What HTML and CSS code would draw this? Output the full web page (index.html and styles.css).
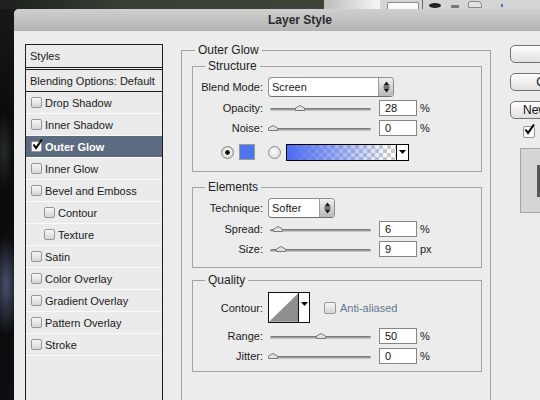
FILE: index.html
```html
<!DOCTYPE html>
<html lang="en">
<head>
<meta charset="UTF-8">
<meta name="viewport" content="width=device-width, initial-scale=1.0">
<title>Layer Style</title>
<link rel="stylesheet" href="styles.css">
</head>
<body>

<div class="desktop">
    <div class="topstrip">
        <div class="strip-photo"></div>
        <div class="strip-fade"></div>
        <div class="strip-tools">
            <span class="tool-box"></span>
            <span class="tool-sep"></span>
            <span class="tool-eye"></span>
            <span class="tool-chip"></span>
            <span class="tool-folder"></span>
            <span class="tool-dot"></span>
        </div>
    </div>

    <div class="dialog">
        <div class="titlebar">Layer Style</div>
        <div class="dialog-body">

            <ul class="styles-list">
                <li class="list-head">Styles</li>
                <li class="list-blend">Blending Options: Default</li>
                <li><span class="check"></span>Drop Shadow</li>
                <li><span class="check"></span>Inner Shadow</li>
                <li class="selected"><span class="check on"><svg width="13" height="12" viewBox="0 0 13 12"><path d="M2.5 5.5 L5 9 L11 0.5" stroke="#000" stroke-width="2" fill="none"/></svg></span>Outer Glow</li>
                <li><span class="check"></span>Inner Glow</li>
                <li><span class="check"></span>Bevel and Emboss</li>
                <li class="sub"><span class="check"></span>Contour</li>
                <li class="sub"><span class="check"></span>Texture</li>
                <li><span class="check"></span>Satin</li>
                <li><span class="check"></span>Color Overlay</li>
                <li><span class="check"></span>Gradient Overlay</li>
                <li><span class="check"></span>Pattern Overlay</li>
                <li><span class="check"></span>Stroke</li>
            </ul>

            <fieldset class="group outer">
                <legend>Outer Glow</legend>

                <fieldset class="group structure">
                    <legend>Structure</legend>
                    <div class="row">
                        <span class="label">Blend Mode:</span>
                        <div class="select blend-select">
                            <span class="select-text">Screen</span>
                            <span class="stepper"><svg width="7" height="12" viewBox="0 0 7 12"><path d="M3.5 0.5 L6.5 4.5 H0.5Z M3.5 11.5 L6.5 7.5 H0.5Z" fill="#111"/><path d="M0.5 6 H6.5" stroke="#111" stroke-width="1"/></svg></span>
                        </div>
                    </div>
                    <div class="row slider-row">
                        <span class="label">Opacity:</span>
                        <div class="slider"><div class="track"></div><svg class="thumb" style="left: 27px" width="10" height="6" viewBox="0 0 10 6"><path d="M0.5 5.5 V3 L5 0.5 L9.5 3 V5.5Z" fill="#e2e2e2" stroke="#7a7a7a"/></svg></div>
                        <input class="num" type="text" value="28">
                        <span class="unit">%</span>
                    </div>
                    <div class="row">
                        <span class="label">Noise:</span>
                        <div class="slider"><div class="track"></div><svg class="thumb" style="left: 0px" width="10" height="6" viewBox="0 0 10 6"><path d="M0.5 5.5 V3 L5 0.5 L9.5 3 V5.5Z" fill="#e2e2e2" stroke="#7a7a7a"/></svg></div>
                        <input class="num" type="text" value="0">
                        <span class="unit">%</span>
                    </div>
                    <div class="row color-row">
                        <span class="radio on"></span>
                        <span class="swatch"></span>
                        <span class="radio second"></span>
                        <div class="gradient">
                            <span class="gradient-fill"></span>
                            <span class="gradient-arrow"><svg width="7" height="4" viewBox="0 0 7 4"><path d="M0 0 H7 L3.5 4Z" fill="#000"/></svg></span>
                        </div>
                    </div>
                </fieldset>

                <fieldset class="group elements">
                    <legend>Elements</legend>
                    <div class="row">
                        <span class="label">Technique:</span>
                        <div class="select tech-select">
                            <span class="select-text">Softer</span>
                            <span class="stepper"><svg width="7" height="12" viewBox="0 0 7 12"><path d="M3.5 0.5 L6.5 4.5 H0.5Z M3.5 11.5 L6.5 7.5 H0.5Z" fill="#111"/><path d="M0.5 6 H6.5" stroke="#111" stroke-width="1"/></svg></span>
                        </div>
                    </div>
                    <div class="row slider-row">
                        <span class="label">Spread:</span>
                        <div class="slider"><div class="track"></div><svg class="thumb" style="left: 5px" width="10" height="6" viewBox="0 0 10 6"><path d="M0.5 5.5 V3 L5 0.5 L9.5 3 V5.5Z" fill="#e2e2e2" stroke="#7a7a7a"/></svg></div>
                        <input class="num" type="text" value="6">
                        <span class="unit">%</span>
                    </div>
                    <div class="row">
                        <span class="label">Size:</span>
                        <div class="slider"><div class="track"></div><svg class="thumb" style="left: 8px" width="10" height="6" viewBox="0 0 10 6"><path d="M0.5 5.5 V3 L5 0.5 L9.5 3 V5.5Z" fill="#e2e2e2" stroke="#7a7a7a"/></svg></div>
                        <input class="num" type="text" value="9">
                        <span class="unit">px</span>
                    </div>
                </fieldset>

                <fieldset class="group quality">
                    <legend>Quality</legend>
                    <div class="row contour-row">
                        <span class="label">Contour:</span>
                        <div class="contour">
                            <svg class="contour-curve" width="30" height="29" viewBox="0 0 30 29"><path d="M0 29 L30 0 V29Z" fill="#8f8f8f"/></svg>
                            <span class="contour-arrow"><svg width="7" height="4" viewBox="0 0 7 4"><path d="M0 0 H7 L3.5 4Z" fill="#000"/></svg></span>
                        </div>
                        <span class="check small"></span>
                        <span class="disabled">Anti-aliased</span>
                    </div>
                    <div class="row slider-row range-row">
                        <span class="label">Range:</span>
                        <div class="slider"><div class="track"></div><svg class="thumb" style="left: 48px" width="10" height="6" viewBox="0 0 10 6"><path d="M0.5 5.5 V3 L5 0.5 L9.5 3 V5.5Z" fill="#e2e2e2" stroke="#7a7a7a"/></svg></div>
                        <input class="num" type="text" value="50">
                        <span class="unit">%</span>
                    </div>
                    <div class="row">
                        <span class="label">Jitter:</span>
                        <div class="slider"><div class="track"></div><svg class="thumb" style="left: 0px" width="10" height="6" viewBox="0 0 10 6"><path d="M0.5 5.5 V3 L5 0.5 L9.5 3 V5.5Z" fill="#e2e2e2" stroke="#7a7a7a"/></svg></div>
                        <input class="num" type="text" value="0">
                        <span class="unit">%</span>
                    </div>
                </fieldset>
            </fieldset>

            <div class="side">
                <button class="side-button">OK</button>
                <button class="side-button">Cancel</button>
                <button class="side-button">New Style...</button>
                <div class="side-check">
                    <span class="check small on"><svg width="13" height="12" viewBox="0 0 13 12"><path d="M2.5 5.5 L5 9 L11 0.5" stroke="#000" stroke-width="2" fill="none"/></svg></span>
                    <span>Preview</span>
                </div>
                <div class="preview"><div class="preview-inner"></div></div>
            </div>

        </div>
    </div>
</div>

</body>
</html>
```

FILE: styles.css
```css
body {
    margin: 0;
    background-color: #0b0b0c;
    font-family: "Liberation Sans", Arial, sans-serif;
    font-size: 11px;
    color: #1a1a1a;
}
.desktop {
    position: relative;
    width: 540px;
    height: 400px;
    overflow: hidden;
    background:
        radial-gradient(ellipse 14px 50px at 6px 285px, #46506a, transparent),
        radial-gradient(ellipse 10px 40px at 4px 150px, #262b2a, transparent),
        linear-gradient(#181a17, #0a0a0b 30%, #0e0e12);
}

/* Strip of the window behind the dialog */
.topstrip {
    display: flex;
    height: 9px;
}
.strip-photo {
    width: 324px;
    background: linear-gradient(to right, #1c1f1b, #3b4036 40%, #3e4237);
}
.strip-fade {
    width: 56px;
    background: linear-gradient(to right, #bdbdbd, #f6f6f6);
}
.strip-tools {
    flex: 1;
    display: flex;
    align-items: flex-end;
    background-color: #d5d5d5;
}
.tool-box {
    width: 30px;
    height: 6px;
    margin-left: 7px;
    border: 1px solid #8a8a8a;
    border-bottom: none;
    border-radius: 2px 2px 0 0;
    background-color: #fafafa;
}
.tool-sep {
    width: 1px;
    height: 9px;
    margin-left: 3px;
    background-color: #666;
}
.tool-eye {
    width: 12px;
    height: 5px;
    margin: 0 0 1px 6px;
    border-radius: 50%;
    background-color: #222;
}
.tool-chip {
    width: 8px;
    height: 3px;
    margin: 0 0 1px 10px;
    background-color: #777;
}
.tool-folder {
    width: 12px;
    height: 5px;
    margin: 0 0 1px 9px;
    border: 1px solid #888;
    border-radius: 2px 4px 0 0;
    background-color: #e4e4e4;
}
.tool-dot {
    width: 2px;
    height: 3px;
    margin: 0 0 2px 19px;
    background-color: #3d73c8;
}

/* Dialog window */
.dialog {
    position: absolute;
    left: 14px;
    top: 9px;
    width: 572px;
    height: 400px;
    background-color: #ececec;
    border-radius: 5px 5px 0 0;
}
.titlebar {
    height: 22px;
    line-height: 22px;
    text-align: center;
    font-size: 12px;
    font-weight: bold;
    color: #2b2b2b;
    background: linear-gradient(#cfcfcf, #b3b3b3);
    border-radius: 5px 5px 0 0;
}
.dialog-body {
    display: flex;
    align-items: flex-start;
    padding: 13px 0 0 11px;
}

/* Styles list */
.styles-list {
    list-style: none;
    margin: 0;
    padding: 0;
    width: 138px;
    height: 380px;
    flex-shrink: 0;
    box-sizing: border-box;
    border: 1px solid #1e1e1e;
    background-color: #ebebeb;
}
.styles-list li {
    display: flex;
    align-items: center;
    height: 21px;
    padding-left: 5px;
    border-bottom: 1px solid #fbfbfb;
}
.styles-list .list-head {
    height: 22px;
    padding-left: 4px;
    border-bottom: 3px double #1e1e1e;
}
.styles-list .list-blend {
    padding-left: 4px;
    border-bottom: 1px solid #1e1e1e;
}
.styles-list .sub {
    padding-left: 18px;
}
.styles-list .selected {
    background-color: #5c6b80;
    color: #fff;
    font-weight: bold;
}
.check {
    position: relative;
    width: 11px;
    height: 11px;
    margin-right: 3px;
    flex-shrink: 0;
    box-sizing: border-box;
    border: 1px solid #969696;
    border-radius: 2px;
    background: linear-gradient(#f6f6f6, #d6d6d6);
}
.check.on {
    background: #fafafa;
}
.check svg {
    position: absolute;
    left: -1px;
    top: -3px;
}
.check.small {
    width: 12px;
    height: 12px;
}

/* Group boxes */
.group {
    margin: 0;
    padding: 0;
    min-width: 0;
    border: 1px solid #a3a3a3;
}
.group legend {
    margin-left: 12px;
    padding: 0 3px;
    font-size: 12px;
    line-height: 14px;
    color: #222;
}
.outer {
    margin: -1px 0 0 18px;
    width: 310px;
    height: 400px;
    flex-shrink: 0;
    box-sizing: border-box;
}
.outer > legend {
    margin-left: 13px;
}
.structure {
    margin: 2px 8px 0 10px;
    padding: 4px 0 9px;
}
.elements {
    margin: 8px 8px 0 10px;
    padding: 4px 0 8px;
}
.quality {
    margin: 5px 8px 0 10px;
    padding: 5px 0 5px;
}

.row {
    display: flex;
    align-items: center;
    height: 20px;
}
.row .label {
    width: 70px;
    margin-right: 5px;
    flex-shrink: 0;
    text-align: right;
}
.slider-row {
    margin-top: 1px;
}
.range-row {
    margin-top: 3px;
}

/* Dropdowns */
.select {
    display: flex;
    height: 20px;
    box-sizing: border-box;
    border: 1px solid #8e8e8e;
    border-bottom-color: #6e6e6e;
    border-radius: 4px;
    background-color: #fff;
    overflow: hidden;
}
.blend-select {
    width: 126px;
}
.tech-select {
    width: 67px;
}
.select-text {
    flex: 1;
    padding-left: 3px;
    line-height: 19px;
}
.stepper {
    display: flex;
    align-items: center;
    justify-content: center;
    width: 14px;
    border-left: 1px solid #9c9c9c;
    background: linear-gradient(#f0f0f0, #b8b8b8);
}

/* Sliders */
.slider {
    position: relative;
    width: 106px;
    padding: 2px 3px 0 2px;
    flex-shrink: 0;
    box-sizing: border-box;
}
.track {
    height: 3px;
    border-radius: 2px;
    background: linear-gradient(#6c6c6c, #a6a6a6 60%, #d8d8d8);
}
.thumb {
    position: absolute;
    top: -1px;
}
.num {
    width: 38px;
    height: 16px;
    margin: 0 0 0 5px;
    padding: 0 0 0 5px;
    box-sizing: border-box;
    border: 1px solid #868686;
    background-color: #fff;
    font: inherit;
    color: #111;
    outline: none;
}
.unit {
    margin-left: 3px;
}

/* Glow colour row */
.color-row {
    margin-top: 4px;
    padding-left: 28px;
}
.radio {
    width: 13px;
    height: 13px;
    box-sizing: border-box;
    border: 1px solid #8a8a8a;
    border-radius: 50%;
    background: radial-gradient(circle at 45% 40%, #ffffff, #d0d0d0);
}
.radio.on {
    background: radial-gradient(circle, #111 0 2px, #f5f5f5 2.6px 3.4px, #cfcfcf 5.5px);
}
.radio.second {
    margin-left: 13px;
}
.swatch {
    width: 16px;
    height: 16px;
    margin-left: 5px;
    box-sizing: border-box;
    border: 1px solid #9a9a9a;
    background-color: #4e75ef;
}
.gradient {
    display: flex;
    width: 123px;
    height: 17px;
    margin-left: 5px;
    box-sizing: border-box;
    border: 1px solid #000;
}
.gradient-fill {
    flex: 1;
    background:
        linear-gradient(to right, #4b6cf2, rgba(75, 108, 242, 0.55) 45%, rgba(75, 108, 242, 0) 95%),
        repeating-conic-gradient(#cacaca 0 25%, #ffffff 0 50%) 0 0 / 8px 8px;
}
.gradient-arrow {
    display: flex;
    align-items: center;
    justify-content: center;
    width: 11px;
    border-left: 1px solid #000;
    background-color: #fff;
}

/* Contour picker */
.contour-row {
    height: 31px;
}
.contour {
    display: flex;
    width: 42px;
    height: 31px;
    box-sizing: border-box;
    border: 1px solid #111;
    background-color: #fff;
}
.contour-curve {
    display: block;
}
.contour-arrow {
    display: flex;
    align-items: flex-start;
    justify-content: center;
    padding-top: 9px;
    width: 10px;
    border-left: 1px solid #111;
}
.contour-row .check {
    margin: 0 4px 0 14px;
}
.disabled {
    color: #65768f;
}

/* Buttons and preview */
.side {
    display: flex;
    flex-direction: column;
    align-items: flex-start;
    flex-shrink: 0;
    margin: 1px 0 0 19px;
}
.side-button {
    width: 90px;
    height: 18px;
    margin-bottom: 10px;
    padding: 0;
    border: 1px solid #727272;
    border-radius: 5px;
    background: linear-gradient(#ffffff, #e0e0e0);
    font: inherit;
    font-size: 12px;
    color: #111;
    text-align: center;
    white-space: nowrap;
}
.side-check {
    display: flex;
    align-items: center;
    margin: -3px 0 0 13px;
}
.side-check .check {
    margin-right: 5px;
}
.preview {
    width: 70px;
    height: 65px;
    margin: 10px 0 0 10px;
    padding: 16px 0 0 16px;
    box-sizing: border-box;
    border: 1px solid #a4a4a4;
    background-color: #d6d6d6;
}
.preview-inner {
    width: 40px;
    height: 32px;
    background-color: #595959;
}
```
